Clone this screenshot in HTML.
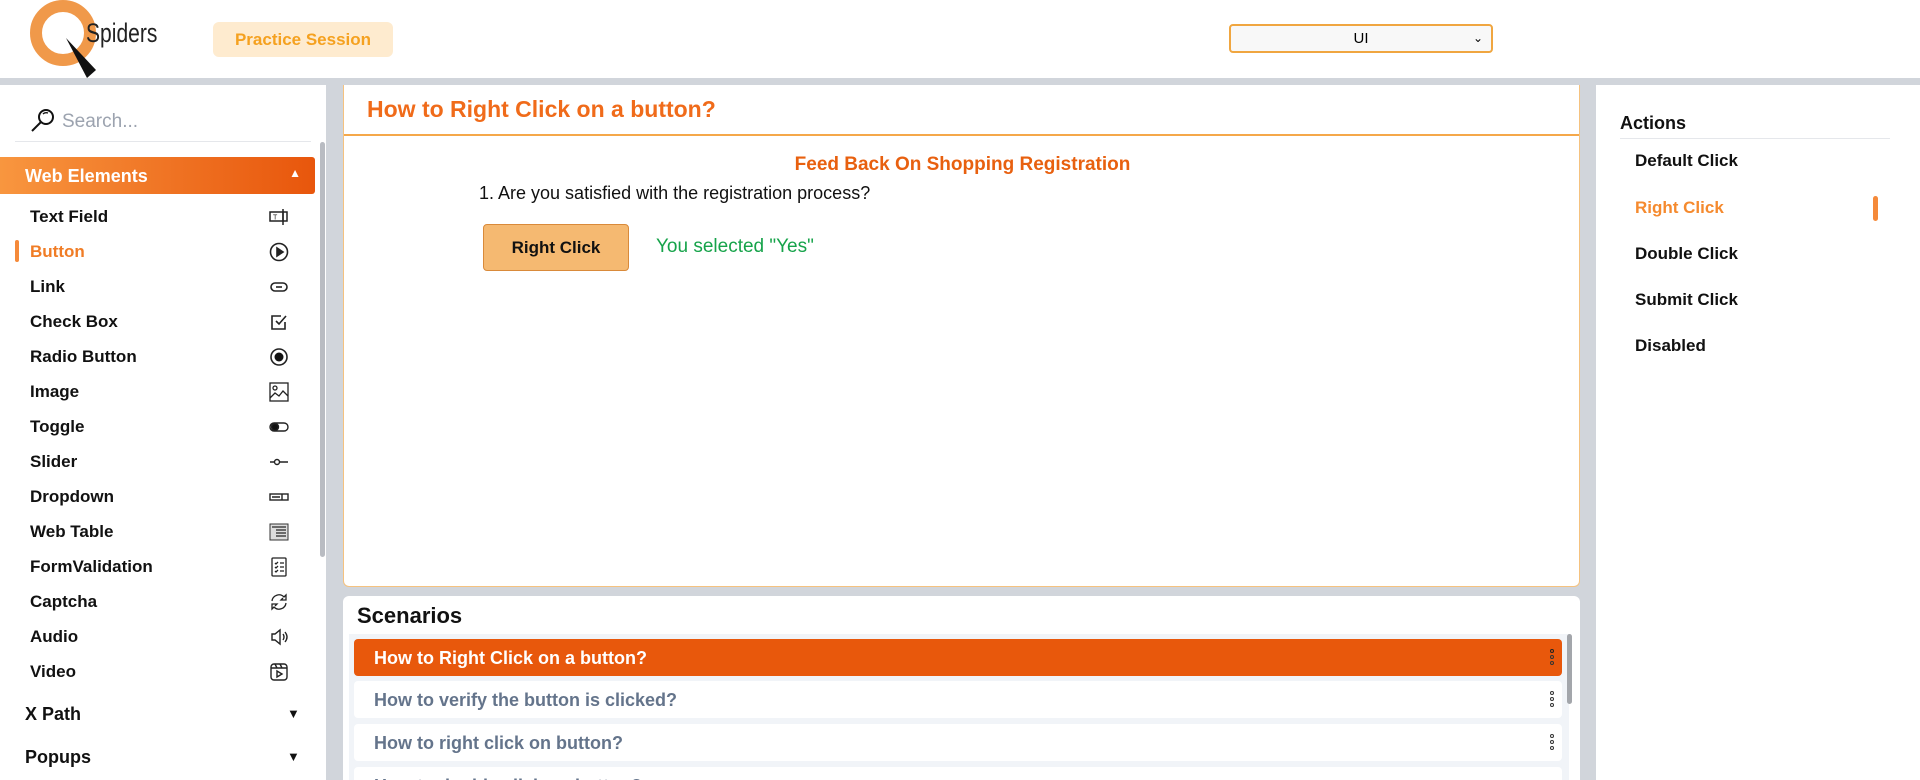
<!DOCTYPE html>
<html style="width:1920px;height:780px;overflow:hidden"><head><meta charset="utf-8"><style>
*{box-sizing:border-box;margin:0;padding:0}
body{width:1920px;height:780px;overflow:hidden;background:#d1d5db;font-family:"Liberation Sans",sans-serif;position:relative}
.abs{position:absolute}
.hdr{left:0;top:0;width:1920px;height:78px;background:#fff}
.side{left:0;top:85px;width:326px;height:695px;background:#fff;overflow:hidden}
.item{position:absolute;left:30px;font-size:17px;font-weight:bold;color:#111}
.ic{position:absolute;left:269px;width:20px;height:20px}
.main{left:343px;top:85px;width:1237px;height:502px;background:#fff;border:1px solid #f5c27f;border-top:none;border-radius:0 0 6px 6px}
.scn{left:343px;top:596px;width:1237px;height:184px;background:#fff;border-radius:6px 6px 0 0;overflow:hidden}
.row{position:absolute;left:11px;width:1208px;height:37px;background:#fff;border-radius:4px;font-size:18px;font-weight:bold;color:#64748b;padding:9px 0 0 20px}
.dots{position:absolute;right:8px;top:10px;width:4px;font-size:0}
.dots i{display:block;width:4px;height:4px;border:1px solid #333;border-radius:50%;margin-bottom:2px}
.right{left:1596px;top:85px;width:324px;height:695px;background:#fff}
.act{position:absolute;left:39px;font-size:17px;font-weight:bold;color:#111}
</style></head><body>
<div class="abs hdr">
  <div class="abs" style="left:30px;top:0;width:66px;height:66px;border:12px solid #f0994a;border-radius:50%"></div>
  <svg class="abs" style="left:62px;top:36px" width="40" height="45"><polygon points="4,2 34,34 25,42" fill="#111"/></svg>
  <div class="abs" style="left:86px;top:18px;font-size:27px;color:#222;transform:scaleX(.78);transform-origin:left">Spiders</div>
  <div class="abs" style="left:213px;top:22px;width:180px;height:35px;background:#feebcf;border-radius:6px;color:#f5a11f;font-weight:bold;font-size:17px;text-align:center;line-height:35px">Practice Session</div>
  <div class="abs" style="left:1229px;top:24px;width:264px;height:29px;border:2px solid #f0a640;border-radius:4px;background:#f8f8f8;font-size:15px;text-align:center;line-height:25px">UI<span style="position:absolute;right:8px;top:0;font-size:12px">&#8964;</span></div>
</div>
<div class="abs side">
  <svg class="abs" style="left:29px;top:22px" width="28" height="28" fill="none" stroke="#111" stroke-width="2"><circle cx="17" cy="10" r="7"/><path d="M12 15 L3 24"/><path d="M14 7 Q16 5 19 6" stroke-width="1.4"/></svg>
  <div class="abs" style="left:62px;top:26px;font-size:19px;color:#9ca3af">Search...</div>
  <div class="abs" style="left:15px;top:56px;width:296px;height:1px;background:#e5e7eb"></div>
  <div class="abs" style="left:0;top:72px;width:315px;height:37px;background:linear-gradient(90deg,#f8963f,#e8560c);border-radius:0 3px 3px 0;color:#fff;font-weight:bold;font-size:18px;padding:9px 0 0 25px">Web Elements<span style="position:absolute;right:14px;top:9px;font-size:12px">&#9650;</span></div>
  <div class="abs" style="left:320px;top:57px;width:5px;height:415px;background:#b9bcc2;border-radius:3px"></div>
  <div class="item" style="top:122px">Text Field</div>
  <div class="item" style="top:157px;color:#f07c25">Button</div>
  <div class="abs" style="left:15px;top:155px;width:4px;height:22px;background:#f58a3a;border-radius:2px"></div>
  <div class="item" style="top:192px">Link</div>
  <div class="item" style="top:227px">Check Box</div>
  <div class="item" style="top:262px">Radio Button</div>
  <div class="item" style="top:297px">Image</div>
  <div class="item" style="top:332px">Toggle</div>
  <div class="item" style="top:367px">Slider</div>
  <div class="item" style="top:402px">Dropdown</div>
  <div class="item" style="top:437px">Web Table</div>
  <div class="item" style="top:472px">FormValidation</div>
  <div class="item" style="top:507px">Captcha</div>
  <div class="item" style="top:542px">Audio</div>
  <div class="item" style="top:577px">Video</div>
  <div class="item" style="top:619px;left:25px;font-size:18px">X Path<span style="position:absolute;left:262px;top:2px;font-size:13px">&#9660;</span></div>
  <div class="item" style="top:662px;left:25px;font-size:18px">Popups<span style="position:absolute;left:262px;top:2px;font-size:13px">&#9660;</span></div>
  <svg class="ic" style="top:122px" viewBox="0 0 20 20" fill="none" stroke="#222" stroke-width="1.5"><rect x="1" y="5" width="13" height="9"/><path d="M14 5h4v9h-4M14 2v16"/><text x="4" y="12.5" font-size="7" fill="#222" stroke="none" font-family="Liberation Sans">T</text></svg>
  <svg class="ic" style="top:157px" viewBox="0 0 20 20" fill="none" stroke="#222" stroke-width="1.6"><circle cx="10" cy="10" r="8.5"/><path d="M8 6v8l6-4z" fill="#222"/></svg>
  <svg class="ic" style="top:192px" viewBox="0 0 20 20" fill="none" stroke="#222" stroke-width="1.6"><rect x="2" y="6" width="16" height="8" rx="4"/><path d="M7 10h6"/></svg>
  <svg class="ic" style="top:227px" viewBox="0 0 20 20" fill="none" stroke="#222" stroke-width="1.6"><path d="M16 10v7H3V4h9"/><path d="M7 9l3 3 7-8"/></svg>
  <svg class="ic" style="top:262px" viewBox="0 0 20 20"><circle cx="10" cy="10" r="8" fill="none" stroke="#222" stroke-width="1.6"/><circle cx="10" cy="10" r="4.5" fill="#111"/></svg>
  <svg class="ic" style="top:297px" viewBox="0 0 20 20" fill="none" stroke="#222" stroke-width="1.3"><rect x="1" y="1" width="18" height="18"/><circle cx="6" cy="6" r="2"/><path d="M1 16l5-5 4 3 4-5 5 5"/></svg>
  <svg class="ic" style="top:332px" viewBox="0 0 20 20" fill="none" stroke="#222" stroke-width="1.4"><rect x="1" y="6" width="18" height="8" rx="4"/><circle cx="6" cy="10" r="3.5" fill="#111"/></svg>
  <svg class="ic" style="top:367px" viewBox="0 0 20 20" fill="none" stroke="#222" stroke-width="1.4"><path d="M1 10h4M11 10h8"/><circle cx="8" cy="10" r="2.5"/></svg>
  <svg class="ic" style="top:402px" viewBox="0 0 20 20" fill="none" stroke="#222" stroke-width="1.4"><rect x="1" y="7" width="18" height="6"/><path d="M3 10h8M13 7v6" /></svg>
  <svg class="ic" style="top:437px" viewBox="0 0 20 20"><rect x="1" y="2" width="18" height="16" fill="#ddd" stroke="#333"/><path d="M3 5h14M7 8h10M7 11h10M7 14h10" stroke="#444" stroke-width="1.5"/></svg>
  <svg class="ic" style="top:472px" viewBox="0 0 20 20" fill="none" stroke="#222" stroke-width="1.3"><rect x="3" y="1" width="14" height="18" rx="1"/><path d="M6 6l1 1 2-2M11 6h4M6 10l1 1 2-2M11 10h4M6 14l1 1 2-2M11 14h4"/></svg>
  <svg class="ic" style="top:507px" viewBox="0 0 20 20" fill="none" stroke="#222" stroke-width="1.3"><path d="M3 9a7 7 0 0 1 12-4l2-2v5h-5l2-2M17 11a7 7 0 0 1-12 4l-2 2v-5h5l-2 2"/></svg>
  <svg class="ic" style="top:542px" viewBox="0 0 20 20" fill="none" stroke="#222" stroke-width="1.4"><path d="M3 7h3l5-4v14l-5-4H3z"/><path d="M14 7q2 3 0 6M16 5q4 5 0 10"/></svg>
  <svg class="ic" style="top:577px" viewBox="0 0 20 20" fill="none" stroke="#222" stroke-width="1.4"><rect x="2" y="2" width="16" height="16" rx="3"/><path d="M2 6h16M6 2l2 4M11 2l2 4"/><path d="M8 9v6l5-3z"/></svg>
</div>
<div class="abs main">
  <div class="abs" style="left:23px;top:11px;font-size:23px;font-weight:bold;color:#f06b1a">How to Right Click on a button?</div>
  <div class="abs" style="left:0;top:49px;width:1235px;height:2px;background:#f5a84a"></div>
  <div class="abs" style="left:0;top:69px;width:1237px;text-align:center;font-size:19px;font-weight:bold;color:#e8600f">Feed Back On Shopping Registration</div>
  <div class="abs" style="left:135px;top:98px;font-size:18px;color:#111">1. Are you satisfied with the registration process?</div>
  <div class="abs" style="left:139px;top:139px;width:146px;height:47px;background:#f5b971;border:1px solid #d98a3a;border-radius:4px;text-align:center;line-height:45px;font-weight:bold;font-size:17px;color:#111">Right Click</div>
  <div class="abs" style="left:312px;top:151px;font-size:19px;color:#16a34a">You selected "Yes"</div>
</div>
<div class="abs scn">
  <div class="abs" style="left:14px;top:7px;font-size:22px;font-weight:bold;color:#111">Scenarios</div>
  <div class="abs" style="left:6px;top:38px;width:1220px;height:160px;background:#f1f4f8"></div>
  <div class="row" style="top:43px;background:#e8580c;color:#fff">How to Right Click on a button?<div class="dots"><i style="border-color:#222"></i><i></i><i></i></div></div>
  <div class="row" style="top:85px">How to verify the button is clicked?<div class="dots"><i></i><i></i><i></i></div></div>
  <div class="row" style="top:128px">How to right click on button?<div class="dots"><i></i><i></i><i></i></div></div>
  <div class="row" style="top:171px">How to double click on button?</div>
  <div class="abs" style="left:1224px;top:38px;width:5px;height:70px;background:#a3a6ab;border-radius:3px"></div>
</div>
<div class="abs right">
  <div class="abs" style="left:24px;top:28px;font-size:18px;font-weight:bold;color:#111">Actions</div>
  <div class="abs" style="left:24px;top:53px;width:270px;height:1px;background:#e5e7eb"></div>
  <div class="act" style="top:66px">Default Click</div>
  <div class="act" style="top:113px;color:#f58a2e">Right Click</div>
  <div class="abs" style="left:277px;top:111px;width:5px;height:25px;background:#f58a3a;border-radius:3px"></div>
  <div class="act" style="top:159px">Double Click</div>
  <div class="act" style="top:205px">Submit Click</div>
  <div class="act" style="top:251px">Disabled</div>
</div>
</body></html>
